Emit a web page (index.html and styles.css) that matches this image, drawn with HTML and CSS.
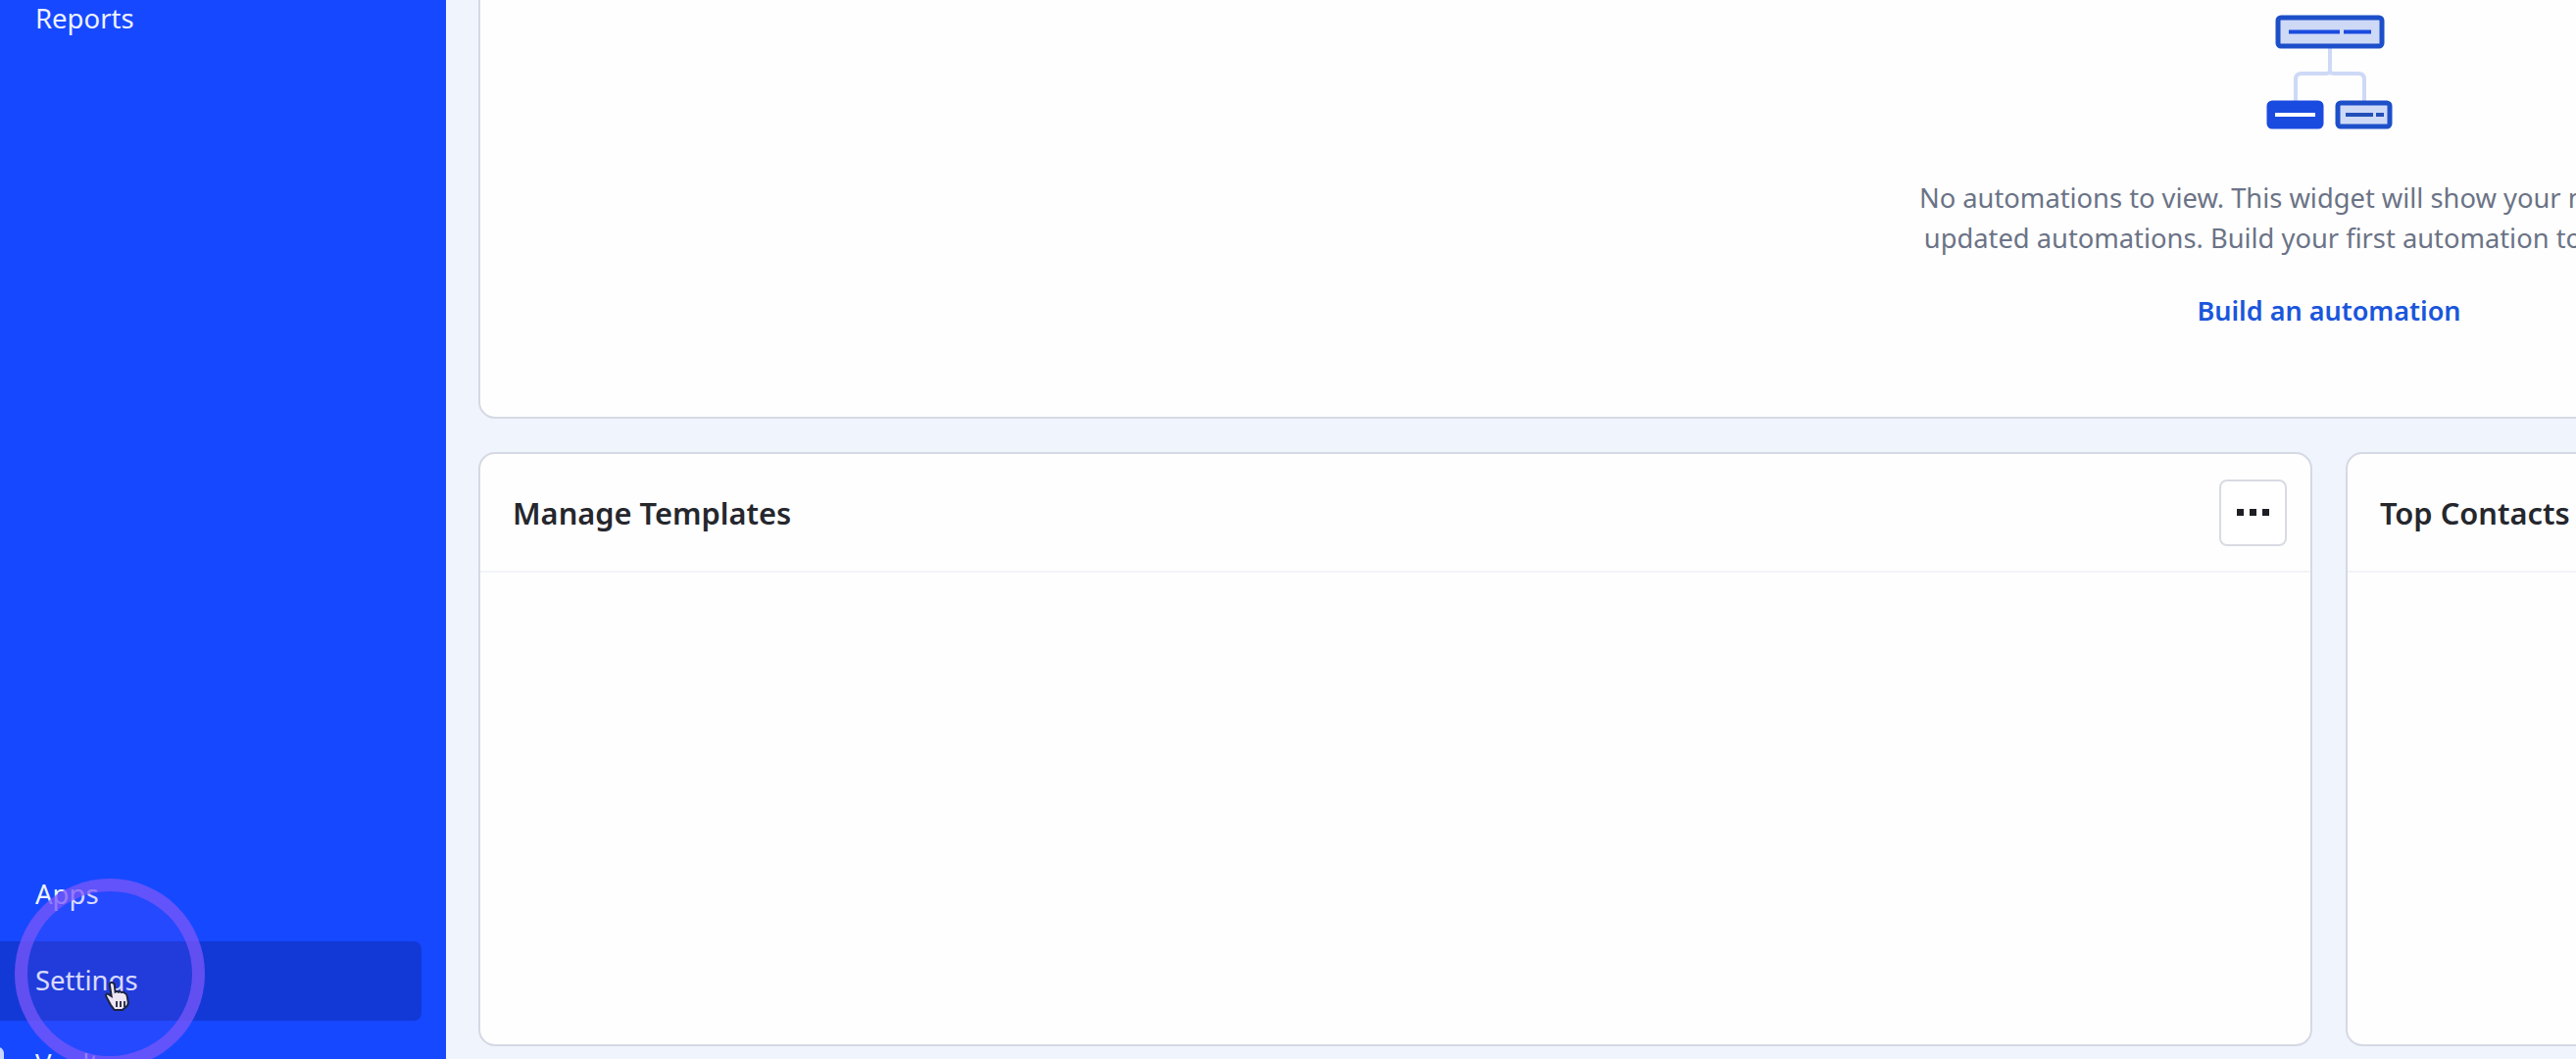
FILE: index.html
```html
<!DOCTYPE html>
<html lang="en">
<head>
    <meta charset="UTF-8">
    <title>Dashboard</title>
    <link rel="stylesheet" href="styles.css">
</head>
<body>
    <div class="app">
        <aside class="sidebar">
            <nav class="nav-top">
                <a class="nav-item">Reports</a>
            </nav>
            <nav class="nav-bottom">
                <a class="nav-item">Apps</a>
                <a class="nav-item active">Settings</a>
                <a class="nav-item">Vault</a>
            </nav>
            <div class="click-ring"></div>
            <svg class="cursor" viewBox="0 0 26 32" width="26" height="32">
                <path d="M7 2c1.600 0 2.600 1 2.800 2.600l.8 7c1-.6 2.400-.6 3.200.2 1-.6 2.400-.5 3.200.3 1.200-.5 2.600-.2 3.400.8 1 .3 2 1.500 2.300 3l1 6.100c.2 2-1 4.500-3 5.500l-3 2.500h-8l-4-5.500-4.500-8.500c-.6-1.300.6-2.800 2-2.300l3.500 2.300-1.800-11.500c-.2-1.400.6-2.500 1.600-2.500z" fill="#efe6f4" stroke="#1c2440" stroke-width="2"/>
                <path d="M12 21v6M16 21v6M20 21v6" stroke="#1c2440" stroke-width="1.800"/>
            </svg>
            <span class="edge-mark"></span>
        </aside>
        <main class="main">
            <section class="card card-wide">
                <div class="empty">
                    <svg class="empty-icon" viewBox="0 0 133 121" width="133" height="121">
                        <path d="M67 36v22c0 4-2 4-5 4H38c-4 0-6 2-6 6v24M67 58c0 4 2 4 5 4h24c4 0 6 2 6 6v24" fill="none" stroke="#ced9f6" stroke-width="4"/>
                        <rect x="14" y="5" width="106" height="29" rx="3" fill="#ced9f6" stroke="#1d4fc9" stroke-width="5"/>
                        <path d="M25 19.500h52M81 19.500h28" stroke="#1a4be0" stroke-width="4"/>
                        <rect x="5" y="92" width="53" height="24" rx="3" fill="#1a4be0" stroke="#1a4be0" stroke-width="5"/>
                        <path d="M11 104h41" stroke="#fff" stroke-width="4"/>
                        <rect x="75" y="92" width="53" height="24" rx="3" fill="#ced9f6" stroke="#1d4fc9" stroke-width="5"/>
                        <path d="M83 104h28M114 104h8" stroke="#2250b8" stroke-width="4"/>
                    </svg>
                    <p class="empty-text">No automations to view. This widget will show your most recently<br>updated automations. Build your first automation to get started.</p>
                    <a class="empty-link">Build an automation</a>
                </div>
            </section>
            <div class="card-row">
                <section class="card card-templates">
                    <header class="card-head">
                        <h2>Manage Templates</h2>
                        <button class="more-btn"><span></span><span></span><span></span></button>
                    </header>
                </section>
                <section class="card card-contacts">
                    <header class="card-head">
                        <h2>Top Contacts</h2>
                    </header>
                </section>
            </div>
        </main>
    </div>
</body>
</html>
```

FILE: styles.css
```css
* {
    box-sizing: border-box;
}

html, body {
    margin: 0;
    height: 100%;
    overflow: hidden;
}

body {
    font-family: 'Noto Sans', 'Liberation Sans', sans-serif;
    background-color: #f0f4fd;
}

.app {
    display: flex;
    width: 2628px;
    height: 1080px;
    overflow: hidden;
}

.sidebar {
    position: relative;
    flex: 0 0 455px;
    display: flex;
    flex-direction: column;
    justify-content: space-between;
    background-color: #1648ff;
    overflow: hidden;
}

.nav-top {
    margin-top: -21px;
}

.nav-bottom {
    display: flex;
    flex-direction: column;
    gap: 4px;
    margin-bottom: -46px;
}

.nav-item {
    display: flex;
    align-items: center;
    width: 430px;
    height: 81px;
    padding: 0 0 3px 36px;
    color: #eef3ff;
    font-size: 27.500px;
    border-radius: 0 8px 8px 0;
}

.nav-item.active {
    margin-top: 3px;
    background-color: #1239d6;
}

.click-ring {
    position: absolute;
    left: 15px;
    top: 896px;
    width: 194px;
    height: 194px;
    border: 13px solid rgba(122, 88, 250, 0.72);
    border-radius: 50%;
    background-color: rgba(110, 80, 250, 0.16);
}

.cursor {
    position: absolute;
    left: 107px;
    top: 1000px;
}

.edge-mark {
    position: absolute;
    left: -8px;
    top: 1068px;
    width: 12px;
    height: 30px;
    background-color: #c9d6ff;
    border-radius: 6px 6px 0 0;
}

.main {
    flex: 1;
    display: flex;
    flex-direction: column;
    gap: 34px;
    padding: 0 0 0 33px;
    min-width: 0;
    overflow: hidden;
}

.card {
    flex: none;
    background: #fefefe;
    border: 2px solid #d5d9e4;
    border-radius: 17px;
}

.card-wide {
    width: 3776px;
    height: 447px;
    margin-top: -20px;
}

.empty {
    display: flex;
    flex-direction: column;
    align-items: center;
    padding-top: 31px;
}

.empty-text {
    margin: 47px 0 0;
    color: #6b7386;
    font-size: 27.300px;
    line-height: 41px;
    text-align: center;
    white-space: nowrap;
}

.empty-link {
    margin-top: 35px;
    color: #1a56db;
    font-size: 27px;
    font-weight: 600;
}

.card-row {
    display: flex;
    gap: 34px;
}

.card-templates {
    width: 1871px;
    height: 606px;
}

.card-contacts {
    width: 1871px;
    height: 606px;
}

.card-head {
    display: flex;
    align-items: center;
    justify-content: space-between;
    height: 121px;
    padding: 0 24px 0 33px;
    border-bottom: 2px solid #f2f3f6;
}

.card-head h2 {
    margin: 0;
    color: #25272d;
    font-size: 30.800px;
    font-weight: 600;
}

.more-btn {
    display: flex;
    align-items: center;
    justify-content: center;
    gap: 6px;
    width: 69px;
    height: 68px;
    padding: 0;
    background: #fff;
    border: 2px solid #d8dbe2;
    border-radius: 8px;
}

.more-btn span {
    width: 7px;
    height: 7px;
    background-color: #1d1f24;
}
```
